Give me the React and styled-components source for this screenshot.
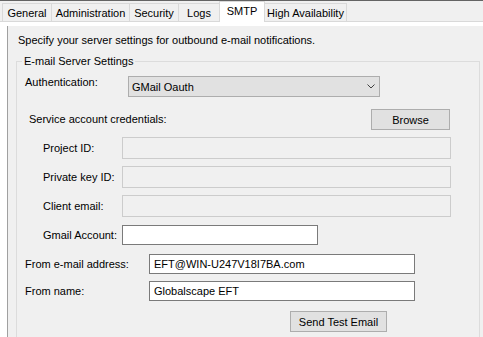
import React from 'react';
import styled, { createGlobalStyle } from 'styled-components';

const Global = createGlobalStyle`
  html, body {
    margin: 0;
    padding: 0;
    background: #ffffff;
  }
  body {
    font-family: "Liberation Sans", Arial, sans-serif;
    font-size: 11px;
    color: #000;
  }
  #root {
    height: 337px;
    overflow: hidden;
  }
`;

const Window = styled.div`
  display: flex;
  flex-direction: column;
  height: 337px;
  box-sizing: border-box;
  border-top: 1px solid #646464;
  overflow: hidden;
`;

const TabStrip = styled.div`
  display: flex;
  align-items: flex-end;
  height: 21px;
  box-sizing: border-box;
  padding-left: 2px;
  background: #f0f0f0;
  border-bottom: 1px solid #d9d9d9;
`;

const Tab = styled.div`
  width: ${p => p.$w}px;
  height: ${p => (p.$active ? 21 : 18)}px;
  box-sizing: border-box;
  margin-left: -1px;
  margin-bottom: ${p => (p.$active ? -1 : 0)}px;
  padding: ${p => (p.$active ? '0 0 3px' : '1px 0 0')};
  display: flex;
  align-items: center;
  justify-content: center;
  border: 1px solid #d9d9d9;
  border-bottom: none;
  background: ${p => (p.$active ? '#ffffff' : '#f0f0f0')};
  position: relative;
  z-index: ${p => (p.$active ? 1 : 0)};
  white-space: nowrap;

  &:first-child {
    margin-left: 0;
  }
`;

const Page = styled.div`
  flex: 1;
  display: flex;
  padding: 4px 0 0 7px;
  background: #ffffff;
`;

const Panel = styled.div`
  flex: 1;
  display: flex;
  flex-direction: column;
  padding-top: 7px;
  background: #f0f0f0;
  border-left: 1px solid #a0a0a0;
`;

const Intro = styled.div`
  margin-left: 10px;
  line-height: 14px;
`;

const Group = styled.fieldset`
  margin: 7px 3px 0 8px;
  padding: 8px 0 40px;
  min-width: 0;
  border: 1px solid #dcdcdc;
`;

const Legend = styled.legend`
  margin-left: 5px;
  padding: 0 2px;
  line-height: 14px;
`;

const Row = styled.div`
  display: flex;
  align-items: center;
  justify-content: ${p => (p.$spread ? 'space-between' : 'flex-start')};
  margin-top: ${p => p.$gap || 0}px;
  padding-left: ${p => p.$indent}px;
  padding-right: ${p => p.$right || 0}px;
`;

const Label = styled.span`
  width: ${p => (p.$w ? `${p.$w}px` : 'auto')};
  flex-shrink: 0;
  line-height: 13px;
  align-self: ${p => (p.$top ? 'flex-start' : 'center')};
  white-space: nowrap;
`;

const Combo = styled.div`
  width: 252px;
  height: 21px;
  box-sizing: border-box;
  display: flex;
  align-items: center;
  justify-content: space-between;
  padding: 0 4px 0 3px;
  background: #e1e1e1;
  border: 1px solid #adadad;
`;

const Button = styled.button`
  width: ${p => p.$w}px;
  height: 21px;
  box-sizing: border-box;
  padding: 0;
  background: #e1e1e1;
  border: 1px solid #adadad;
  border-radius: 0;
  font: inherit;
  color: #000;
`;

const Field = styled.input`
  width: ${p => p.$w}px;
  height: ${p => p.$h || 20}px;
  box-sizing: border-box;
  padding: 0 4px;
  margin: 0;
  font: inherit;
  color: #000;
  background: ${p => (p.disabled ? '#f0f0f0' : '#ffffff')};
  border: 1px solid ${p => (p.disabled ? '#cccccc' : '#7a7a7a')};
  border-radius: 0;
  outline: none;
`;

const Chevron = () => (
  <svg width="8" height="5" viewBox="0 0 8 5">
    <polyline points="0.5,0.5 4,4 7.5,0.5" fill="none" stroke="#404040" strokeWidth="1" />
  </svg>
);

const tabs = [
  { name: 'General', w: 50 },
  { name: 'Administration', w: 79 },
  { name: 'Security', w: 50 },
  { name: 'Logs', w: 42 },
  { name: 'SMTP', w: 46, active: true },
  { name: 'High Availability', w: 83 },
];

const credentials = [
  { label: 'Project ID:', gap: 7 },
  { label: 'Private key ID:', gap: 7 },
  { label: 'Client email:', gap: 7 },
];

const App = () => (
  <>
    <Global />
    <Window>
      <TabStrip>
        {tabs.map(t => (
          <Tab key={t.name} $w={t.w} $active={t.active}>{t.name}</Tab>
        ))}
      </TabStrip>
      <Page>
        <Panel>
          <Intro>Specify your server settings for outbound e-mail notifications.</Intro>
          <Group>
            <Legend>E-mail Server Settings</Legend>

            <Row $indent={8}>
              <Label $w={103} $top>Authentication:</Label>
              <Combo>
                <span>GMail Oauth</span>
                <Chevron />
              </Combo>
            </Row>

            <Row $indent={12} $right={29} $gap={12} $spread>
              <Label>Service account credentials:</Label>
              <Button $w={79}>Browse</Button>
            </Row>

            {credentials.map(c => (
              <Row key={c.label} $indent={26} $gap={c.gap}>
                <Label $w={79}>{c.label}</Label>
                <Field $w={329} $h={22} disabled defaultValue="" />
              </Row>
            ))}

            <Row $indent={26} $gap={8}>
              <Label $w={79}>Gmail Account:</Label>
              <Field $w={196} readOnly defaultValue="" />
            </Row>

            <Row $indent={8} $gap={9}>
              <Label $w={124}>From e-mail address:</Label>
              <Field $w={266} readOnly defaultValue="EFT@WIN-U247V18I7BA.com" />
            </Row>

            <Row $indent={8} $gap={7}>
              <Label $w={124}>From name:</Label>
              <Field $w={266} readOnly defaultValue="Globalscape EFT" />
            </Row>

            <Row $indent={273} $gap={10}>
              <Button $w={97}>Send Test Email</Button>
            </Row>
          </Group>
        </Panel>
      </Page>
    </Window>
  </>
);

export default App;
